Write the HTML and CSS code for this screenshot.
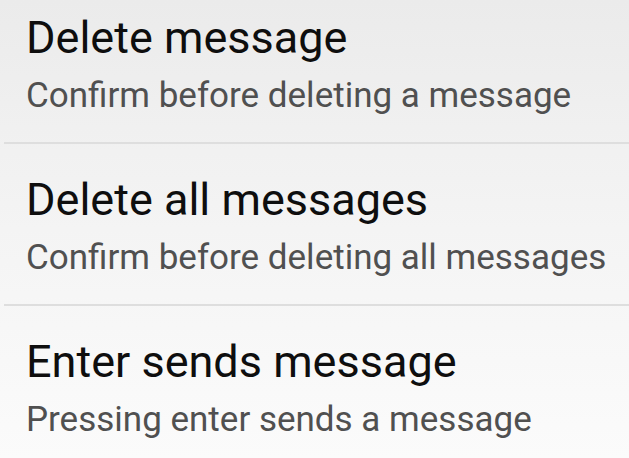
FILE: index.html
```html
<!DOCTYPE html>
<html lang="en">
<head>
<meta charset="utf-8">
<title>Message settings</title>
<link rel="stylesheet" href="styles.css">
</head>
<body>
<ul class="prefs">
  <li class="pref">
    <div class="pref-title">Delete message</div>
    <div class="pref-summary">Confirm before deleting a message</div>
  </li>
  <li class="pref">
    <div class="pref-title">Delete all messages</div>
    <div class="pref-summary">Confirm before deleting all messages</div>
  </li>
  <li class="pref">
    <div class="pref-title">Enter sends message</div>
    <div class="pref-summary">Pressing enter sends a message</div>
  </li>
</ul>
</body>
</html>
```
FILE: styles.css
```css
html, body {
  margin: 0;
  padding: 0;
  height: 100%;
}
body {
  background: linear-gradient(to bottom, #ebebeb 0%, #f4f4f4 50%, #fbfbfb 100%);
  font-family: Roboto, "Noto Sans", sans-serif;
  overflow: hidden;
}
.prefs {
  list-style: none;
  margin: -18px 0 0 0;
  padding: 0;
}
.pref {
  padding: 31px 0 26px 22px;
  margin-left: 4px;
  border-bottom: 2px solid #dedede;
}
.pref-title {
  font-size: 45px;
  line-height: 50px;
  color: #0e0e0e;
}
.pref-summary {
  margin-top: 13px;
  font-size: 35px;
  line-height: 40px;
  color: #505050;
}
```
